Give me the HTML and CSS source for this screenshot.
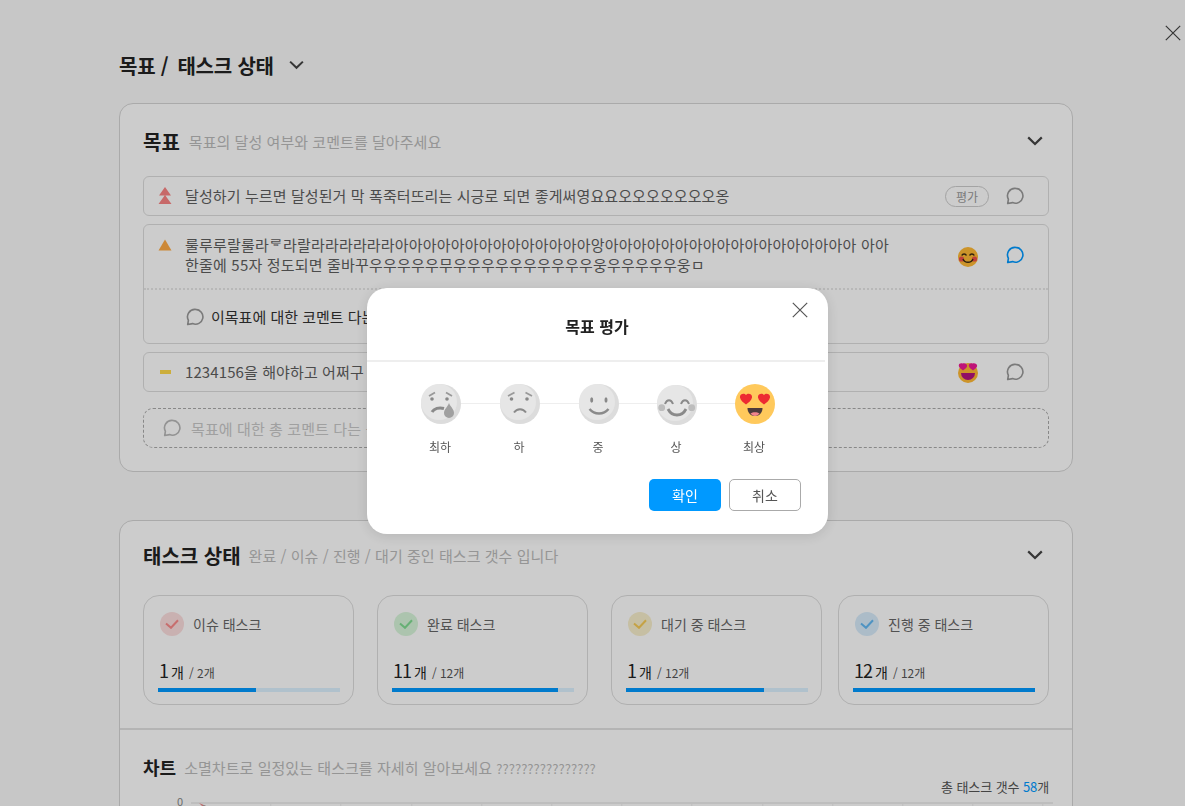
FILE: index.html
```html
<!DOCTYPE html>
<html lang="ko">
<head>
    <meta charset="UTF-8">
    <meta name="viewport" content="width=device-width, initial-scale=1.0">
    <title>목표 / 태스크 상태</title>
<link rel="stylesheet" href="styles.css">
</head>
<body>
<svg class="defs" aria-hidden="true">
    <symbol id="bubble" viewBox="0 0 18 18">
        <path d="M9.6 1.4a7.4 7.4 0 1 1-3 14.2L1.7 16.5l.7-4.2A7.4 7.4 0 0 1 9.6 1.4z" fill="none" stroke="currentColor" stroke-width="1.6" stroke-linejoin="round"/>
    </symbol>
    <symbol id="down" viewBox="0 0 16 10">
        <path d="M1.2 1.4L8 8l6.8-6.6" fill="none" stroke="currentColor" stroke-width="2.2"/>
    </symbol>
    <symbol id="cross" viewBox="0 0 16 16">
        <path d="M.8.8l14.4 14.4M15.2.8L.8 15.2" fill="none" stroke="currentColor" stroke-width="1.2"/>
    </symbol>
    <symbol id="check" viewBox="0 0 14 10">
        <path d="M1 4.4l5 4.4L13 1.2" fill="none" stroke="currentColor" stroke-width="2"/>
    </symbol>
</svg>

<svg class="page-close"><use href="#cross"/></svg>

<div class="page">
    <h1 class="page-title"><span class="crumb">목표 /</span>태스크 상태<svg class="title-arrow"><use href="#down"/></svg></h1>

    <section class="panel goals">
        <div class="panel-head">
            <h2>목표</h2>
            <span class="sub">목표의 달성 여부와 코멘트를 달아주세요</span>
            <svg class="fold"><use href="#down"/></svg>
        </div>

        <div class="goal">
            <div class="goal-main">
                <svg class="prio" viewBox="0 0 14 18"><path d="M7 0l6 8.500H1zM7 8l6.500 9H.5z" fill="#f98484"/></svg>
                <p class="goal-text">달성하기 누르면 달성된거 막 폭죽터뜨리는 시긍로 되면 좋게써영요요오오오오오오오옹</p>
                <span class="rate-pill">평가</span>
                <svg class="bubble"><use href="#bubble"/></svg>
            </div>
        </div>

        <div class="goal">
            <div class="goal-main tall">
                <svg class="prio prio-up" viewBox="0 0 14 12"><path d="M7 .5l6.500 11H.5z" fill="#ffab45"/></svg>
                <p class="goal-text">룰루루랄룰라ᄛ라랄라라라라라라아아아아아아아아아아아아아아앙아아아아아아아아아아아아아아아아아아 아아<br>한줄에 55자 정도되면 줄바꾸우우우우우무우우우우우우우우우우웅우우우우우웅ㅁ</p>
                <svg class="emoji" viewBox="0 0 20 20">
                    <circle cx="10" cy="10" r="10" fill="#ffb935"/>
                    <circle cx="3.500" cy="12" r="2.600" fill="#f0504a"/>
                    <circle cx="16.500" cy="12" r="2.600" fill="#f0504a"/>
                    <path d="M3.800 8.500a2.500 2.500 0 0 1 4.600 0M11.600 8.500a2.500 2.500 0 0 1 4.600 0M5 12a5.400 5.400 0 0 0 10 0" fill="none" stroke="#3c2a12" stroke-width="1.500"/>
                </svg>
                <svg class="bubble active"><use href="#bubble"/></svg>
            </div>
            <div class="goal-comment">
                <svg class="bubble"><use href="#bubble"/></svg>
                <span>이목표에 대한 코멘트 다는 곳 입니다</span>
            </div>
        </div>

        <div class="goal">
            <div class="goal-main">
                <span class="prio-dash"></span>
                <p class="goal-text">1234156을 해야하고 어쩌구 저쩌구</p>
                <svg class="emoji low" viewBox="0 0 20 20">
                    <circle cx="10" cy="10" r="10" fill="#ffb935"/>
                    <path d="M3 10a5 5 0 0 0 14 0z" fill="#b5137f"/>
                    <path d="M5 0C3-1 .5.500 1.500 3c.7 1.700 2.500 2.800 4 4 1.500-1.200 3.300-2.300 4-4C10.200 1 7.500-1 5 0zM15 0c-2-1-4.500.500-3.500 3 .7 1.700 2.500 2.800 4 4 1.500-1.200 3.300-2.300 4-4C20.200 1 17.500-1 15 0z" fill="#ef1a96" transform="translate(-.500 .500)"/>
                </svg>
                <svg class="bubble"><use href="#bubble"/></svg>
            </div>
        </div>

        <div class="total-comment">
            <svg class="bubble"><use href="#bubble"/></svg>
            <span>목표에 대한 총 코멘트 다는 곳 입니다</span>
        </div>
    </section>

    <section class="panel tasks">
        <div class="panel-head">
            <h2>태스크 상태</h2>
            <span class="sub">완료 / 이슈 / 진행 / 대기 중인 태스크 갯수 입니다</span>
            <svg class="fold"><use href="#down"/></svg>
        </div>

        <div class="stats">
            <div class="stat">
                <div class="stat-name"><span class="tick red"><svg><use href="#check"/></svg></span>이슈 태스크</div>
                <div class="stat-count"><b>1</b><em>개</em><small>/ 2개</small></div>
                <div class="bar"><div class="fill" style="width:54%"></div></div>
            </div>
            <div class="stat">
                <div class="stat-name"><span class="tick green"><svg><use href="#check"/></svg></span>완료 태스크</div>
                <div class="stat-count"><b>11</b><em>개</em><small>/ 12개</small></div>
                <div class="bar"><div class="fill" style="width:91%"></div></div>
            </div>
            <div class="stat">
                <div class="stat-name"><span class="tick yellow"><svg><use href="#check"/></svg></span>대기 중 태스크</div>
                <div class="stat-count"><b>1</b><em>개</em><small>/ 12개</small></div>
                <div class="bar"><div class="fill" style="width:76%"></div></div>
            </div>
            <div class="stat">
                <div class="stat-name"><span class="tick blue"><svg><use href="#check"/></svg></span>진행 중 태스크</div>
                <div class="stat-count"><b>12</b><em>개</em><small>/ 12개</small></div>
                <div class="bar"><div class="fill" style="width:100%"></div></div>
            </div>
        </div>

        <div class="chart">
            <div class="chart-head">
                <h3>차트</h3>
                <span class="sub">소멸차트로 일정있는 태스크를 자세히 알아보세요 <span class="marks">????????????????</span></span>
            </div>
            <div class="chart-total">총 태스크 갯수 <span class="num">58</span>개</div>
            <div class="chart-body">
                <span class="axis-zero">0</span>
                <div class="grid">
                    <svg class="burn" viewBox="0 0 12 5"><path d="M0 0l12 5H5z" fill="#e88"/><path d="M4 2l8 3H6z" fill="#6bb"/></svg>
                </div>
            </div>
        </div>
    </section>
</div>

<div class="overlay">
    <div class="modal">
        <svg class="modal-close"><use href="#cross"/></svg>
        <h4 class="modal-title">목표 평가</h4>
        <div class="scale">
            <div class="scale-item">
                <svg class="face" viewBox="0 0 40 40">
                    <circle cx="20" cy="20" r="20" fill="#dcdcdc"/>
                    <circle cx="18" cy="18" r="18" fill="#e6e6e6"/>
                    <path d="M8 12l6-3.500M31 12l-6-3.500" stroke="#999" stroke-width="1.800" fill="none"/>
                    <circle cx="11" cy="15" r="1.800" fill="#888"/>
                    <circle cx="26" cy="15" r="1.800" fill="#888"/>
                    <path d="M11 28c2-3.500 7-5 12-3.500" stroke="#8a8a8a" stroke-width="3" fill="none"/>
                    <path d="M28 19c1.500 4 5 6 5 10a5 5 0 0 1-10 0c0-3.500 3.500-6 5-10z" fill="#a0a0a0"/>
                </svg>
                <span class="scale-label">최하</span>
            </div>
            <div class="scale-item">
                <svg class="face" viewBox="0 0 40 40">
                    <circle cx="20" cy="20" r="20" fill="#dcdcdc"/>
                    <circle cx="18" cy="18" r="18" fill="#e6e6e6"/>
                    <path d="M8 12l6.500-3.500M32 12l-6.500-3.500" stroke="#999" stroke-width="1.800" fill="none"/>
                    <circle cx="11.500" cy="15" r="1.800" fill="#888"/>
                    <circle cx="27" cy="15" r="1.800" fill="#888"/>
                    <path d="M14 28.500c3-4.500 9-4.500 12 0" stroke="#8a8a8a" stroke-width="2" fill="none"/>
                </svg>
                <span class="scale-label">하</span>
            </div>
            <div class="scale-item">
                <svg class="face" viewBox="0 0 40 40">
                    <circle cx="20" cy="20" r="20" fill="#dcdcdc"/>
                    <circle cx="18" cy="18" r="18" fill="#e6e6e6"/>
                    <ellipse cx="12.700" cy="16" rx="1.500" ry="2.800" fill="#888"/>
                    <ellipse cx="27" cy="16" rx="1.500" ry="2.800" fill="#888"/>
                    <path d="M10.500 25c5 6 14 6 19 0" stroke="#8a8a8a" stroke-width="2.400" fill="none"/>
                </svg>
                <span class="scale-label">중</span>
            </div>
            <div class="scale-item fourth">
                <svg class="face" viewBox="0 0 40 40">
                    <circle cx="20" cy="20" r="20" fill="#dcdcdc"/>
                    <circle cx="18" cy="18" r="18" fill="#e6e6e6"/>
                    <circle cx="4.700" cy="22.700" r="3.400" fill="#bdbdbd"/>
                    <circle cx="34.700" cy="22.700" r="3.400" fill="#bdbdbd"/>
                    <path d="M8 19c2-5 6-5 8 0M24 19c2-5 6-5 8 0" stroke="#8a8a8a" stroke-width="2" fill="none"/>
                    <path d="M11 24c4 8 14 8 18 0" stroke="#8a8a8a" stroke-width="2.800" fill="none"/>
                </svg>
                <span class="scale-label">상</span>
            </div>
            <div class="scale-item">
                <svg class="face" viewBox="0 0 40 40">
                    <circle cx="20" cy="20" r="20" fill="#ffc95c"/>
                    <path d="M11 11c-2-2.500-6.500-1-6 2.500.4 3 3.500 5 6 7 2.500-2 5.600-4 6-7 .5-3.500-4-5-6-2.500zM29 11c-2-2.500-6.500-1-6 2.500.4 3 3.500 5 6 7 2.500-2 5.600-4 6-7 .5-3.500-4-5-6-2.500z" fill="#ed2a32"/>
                    <path d="M12.500 24h15c0 4.500-3 8-7.500 8s-7.500-3.500-7.500-8z" fill="#4d3b3b"/>
                    <path d="M15.500 29.500c2.500-1.600 6.500-1.600 9 0-1.200 1.600-2.800 2.500-4.500 2.500s-3.300-.9-4.500-2.500z" fill="#f2858c"/>
                </svg>
                <span class="scale-label">최상</span>
            </div>
        </div>
        <div class="modal-btns">
            <button type="button" class="btn ok">확인</button>
            <button type="button" class="btn cancel">취소</button>
        </div>
    </div>
</div>
</body>
</html>
```

FILE: styles.css
```css
*{box-sizing: border-box;}
html,body{
    margin: 0;
    height: 100%;
}
body{
    height: 806px;
    overflow: hidden;
    background-color: #f9f9f9;
    color: #333;
    font-family: "Noto Sans CJK KR", "Noto Sans", sans-serif;
    font-size: 14px;
}
h1,h2,h3,h4,p{
    margin: 0;
}
.defs{
    display: none;
}
.page-close{
    position: absolute;
    top: 25px;
    right: 4px;
    width: 16px;
    height: 16px;
    color: #444;
}
.page{
    padding: 48px 112px 0 119px;
}
.page-title{
    display: flex;
    align-items: center;
    height: 34px;
    font-size: 20px;
    font-weight: 700;
    letter-spacing: -.2px;
    color: #222;
    margin-bottom: 21px;
    white-space: pre;
}
.crumb{
    margin-right: 9px;
}
.title-arrow{
    width: 15px;
    height: 10px;
    margin-left: 15px;
    color: #444;
}
.panel{
    background-color: #fff;
    border: 1px solid #d5d5d5;
    border-radius: 14px;
    padding: 0 23px;
}
.goals{
    height: 369px;
    margin-bottom: 48px;
}
.panel-head{
    display: flex;
    align-items: center;
    height: 30px;
    margin-top: 22px;
    margin-bottom: 20px;
}
.tasks .panel-head{
    margin-top: 19px;
    margin-bottom: 25px;
}
.panel-head h2{
    font-size: 20px;
    font-weight: 700;
    color: #222;
    margin-right: 9px;
}
.tasks .panel-head h2{
    margin-right: 8px;
}
.sub{
    font-size: 15px;
    letter-spacing: .05px;
    color: #bbb;
}
.marks{
    font-size: 13px;
}
.fold{
    width: 16px;
    height: 10px;
    margin-left: auto;
    margin-right: 6px;
    color: #444;
}
.goal{
    border: 1px solid #ddd;
    border-radius: 6px;
    margin-bottom: 8px;
}
.goal-main{
    display: flex;
    align-items: center;
    height: 38px;
    padding-left: 14px;
}
.goal-main.tall{
    height: 65px;
    border-bottom: 2px dotted #e6e6e6;
}
.prio{
    width: 14px;
    height: 18px;
    flex: none;
    margin-right: 13px;
}
.prio-up{
    height: 12px;
    align-self: flex-start;
    margin-top: 14px;
}
.prio-dash{
    width: 11px;
    height: 4px;
    flex: none;
    margin: 0 14px 0 2px;
    background-color: #ffda4b;
}
.goal-text{
    flex: 1;
    font-size: 15px;
    line-height: 20px;
    letter-spacing: .1px;
    color: #5e5e5e;
    white-space: nowrap;
}
.tall .goal-text{
    letter-spacing: .19px;
    margin-top: -3px;
}
.rate-pill{
    width: 44px;
    height: 21px;
    margin-right: 17px;
    border: 1px solid #ccc;
    border-radius: 11px;
    font-size: 12px;
    line-height: 19px;
    text-align: center;
    color: #999;
}
.bubble{
    width: 18px;
    height: 18px;
    flex: none;
    margin-right: 24px;
    color: #999;
}
.bubble.active{
    color: #0099ff;
    margin-top: -3px;
}
.emoji{
    width: 20px;
    height: 20px;
    flex: none;
    margin-right: 28px;
}
.emoji.low{
    margin-top: 2px;
}
.goal-comment{
    display: flex;
    align-items: center;
    height: 53px;
    padding-left: 42px;
    font-size: 15px;
    color: #333;
}
.goal-comment .bubble{
    margin-right: 7px;
}
.total-comment{
    display: flex;
    align-items: center;
    height: 40px;
    margin-top: 16px;
    padding-left: 19px;
    border: 1px dashed #aaa;
    border-radius: 10px;
    font-size: 15px;
    letter-spacing: .1px;
    color: #c8c8c8;
}
.total-comment .bubble{
    margin-right: 10px;
    color: #b8b8b8;
}
.stats{
    display: flex;
    gap: 23px;
}
.stat{
    width: 211px;
    height: 110px;
    padding: 0 13px 0 14px;
    border: 1px solid #ddd;
    border-radius: 16px;
}
.stat:last-child{
    margin-left: -7px;
}
.stat-name{
    display: flex;
    align-items: center;
    height: 24px;
    margin-top: 16px;
    padding-left: 2px;
    color: #666;
}
.tick{
    display: flex;
    align-items: center;
    justify-content: center;
    width: 24px;
    height: 24px;
    margin-right: 9px;
    border-radius: 50%;
}
.tick svg{
    width: 14px;
    height: 10px;
}
.tick.red{background-color: #fcdede; color: #f98a8a;}
.tick.green{background-color: #d8f5da; color: #80dc92;}
.tick.yellow{background-color: #f8efcc; color: #f7cb55;}
.tick.blue{background-color: #d8ecfb; color: #62b8f3;}
.stat-count{
    display: flex;
    align-items: baseline;
    height: 26px;
    margin-top: 21px;
    padding-left: 1px;
    color: #222;
}
.stat-count b{
    font-size: 18px;
    font-weight: 400;
    letter-spacing: -1px;
}
.stat-count em{
    font-style: normal;
    font-size: 14px;
    margin-left: 3px;
}
.stat-count small{
    font-size: 12px;
    color: #555;
    margin-left: 5px;
}
.bar{
    height: 4px;
    margin-top: 5px;
    background-color: #dcf2ff;
}
.fill{
    height: 100%;
    background-color: #0099ff;
}
.chart{
    margin: 23px -23px 0;
    padding: 22px 23px 0;
    border-top: 2px solid #e2e2e2;
}
.chart-head{
    display: flex;
    align-items: center;
    height: 30px;
}
.chart-head h3{
    font-size: 18px;
    font-weight: 700;
    color: #222;
    margin-right: 8px;
}
.chart-total{
    height: 18px;
    margin-top: -4px;
    font-size: 13px;
    line-height: 18px;
    letter-spacing: -.1px;
    text-align: right;
    color: #555;
}
.num{
    color: #0099ff;
}
.chart-body{
    display: flex;
    align-items: flex-start;
}
.axis-zero{
    width: 40px;
    margin-right: 8px;
    font-size: 11px;
    line-height: 10px;
    color: #888;
    text-align: right;
}
.grid{
    position: relative;
    flex: 1;
    height: 20px;
    margin-top: 6px;
    margin-right: -4px;
    border-top: 2px solid #eee;
    background-image: repeating-linear-gradient(90deg, transparent 0, transparent 69.2px, #eee 69.2px, #eee 70.2px);
    background-position: 10.3px 0;
}
.burn{
    position: absolute;
    top: -1px;
    left: 8px;
    width: 12px;
    height: 5px;
}
.overlay{
    position: fixed;
    top: 0;
    left: 0;
    right: 0;
    bottom: 0;
    display: flex;
    align-items: flex-start;
    padding: 288px 0 0 367px;
    background-color: rgba(0,0,0,.2);
}
.modal{
    position: relative;
    width: 461px;
    height: 246px;
    background-color: #fff;
    border-radius: 20px;
    box-shadow: 0 2px 14px rgba(0,0,0,.12);
}
.modal-close{
    position: absolute;
    top: 14px;
    right: 20px;
    width: 16px;
    height: 16px;
    color: #555;
}
.modal-title{
    height: 74px;
    margin-right: 1px;
    padding-top: 25px;
    font-size: 16px;
    font-weight: 700;
    line-height: 26px;
    text-align: center;
    color: #222;
    position: relative;
}
.modal-title::after{
    content: "";
    position: absolute;
    left: 0;
    right: 2px;
    bottom: 0;
    height: 2px;
    background-color: #eee;
}
.scale{
    position: relative;
    display: flex;
    width: 393px;
    margin: 22px 0 0 34px;
}
.scale::before{
    content: "";
    position: absolute;
    top: 19px;
    left: 40px;
    right: 40px;
    height: 1px;
    background-color: #eee;
}
.scale-item{
    position: relative;
    display: flex;
    flex-direction: column;
    align-items: center;
    width: 79px;
    font-size: 12px;
    color: #555;
}
.scale-item.fourth{
    width: 77px;
}
.face{
    width: 40px;
    height: 40px;
}
.fourth .face{
    margin-top: 1px;
}
.scale-label{
    margin-top: 13px;
    margin-right: 1px;
    line-height: 20px;
}
.fourth .scale-label{
    margin-top: 12px;
}
.modal-btns{
    display: flex;
    justify-content: flex-end;
    gap: 8px;
    margin: 22px 27px 0 0;
}
.btn{
    width: 72px;
    height: 32px;
    border-radius: 5px;
    font-family: inherit;
    font-size: 14px;
}
.ok{
    background-color: #0099ff;
    border: 0;
    color: #fff;
}
.cancel{
    background-color: #fff;
    border: 1px solid #aaa;
    color: #555;
}
```
